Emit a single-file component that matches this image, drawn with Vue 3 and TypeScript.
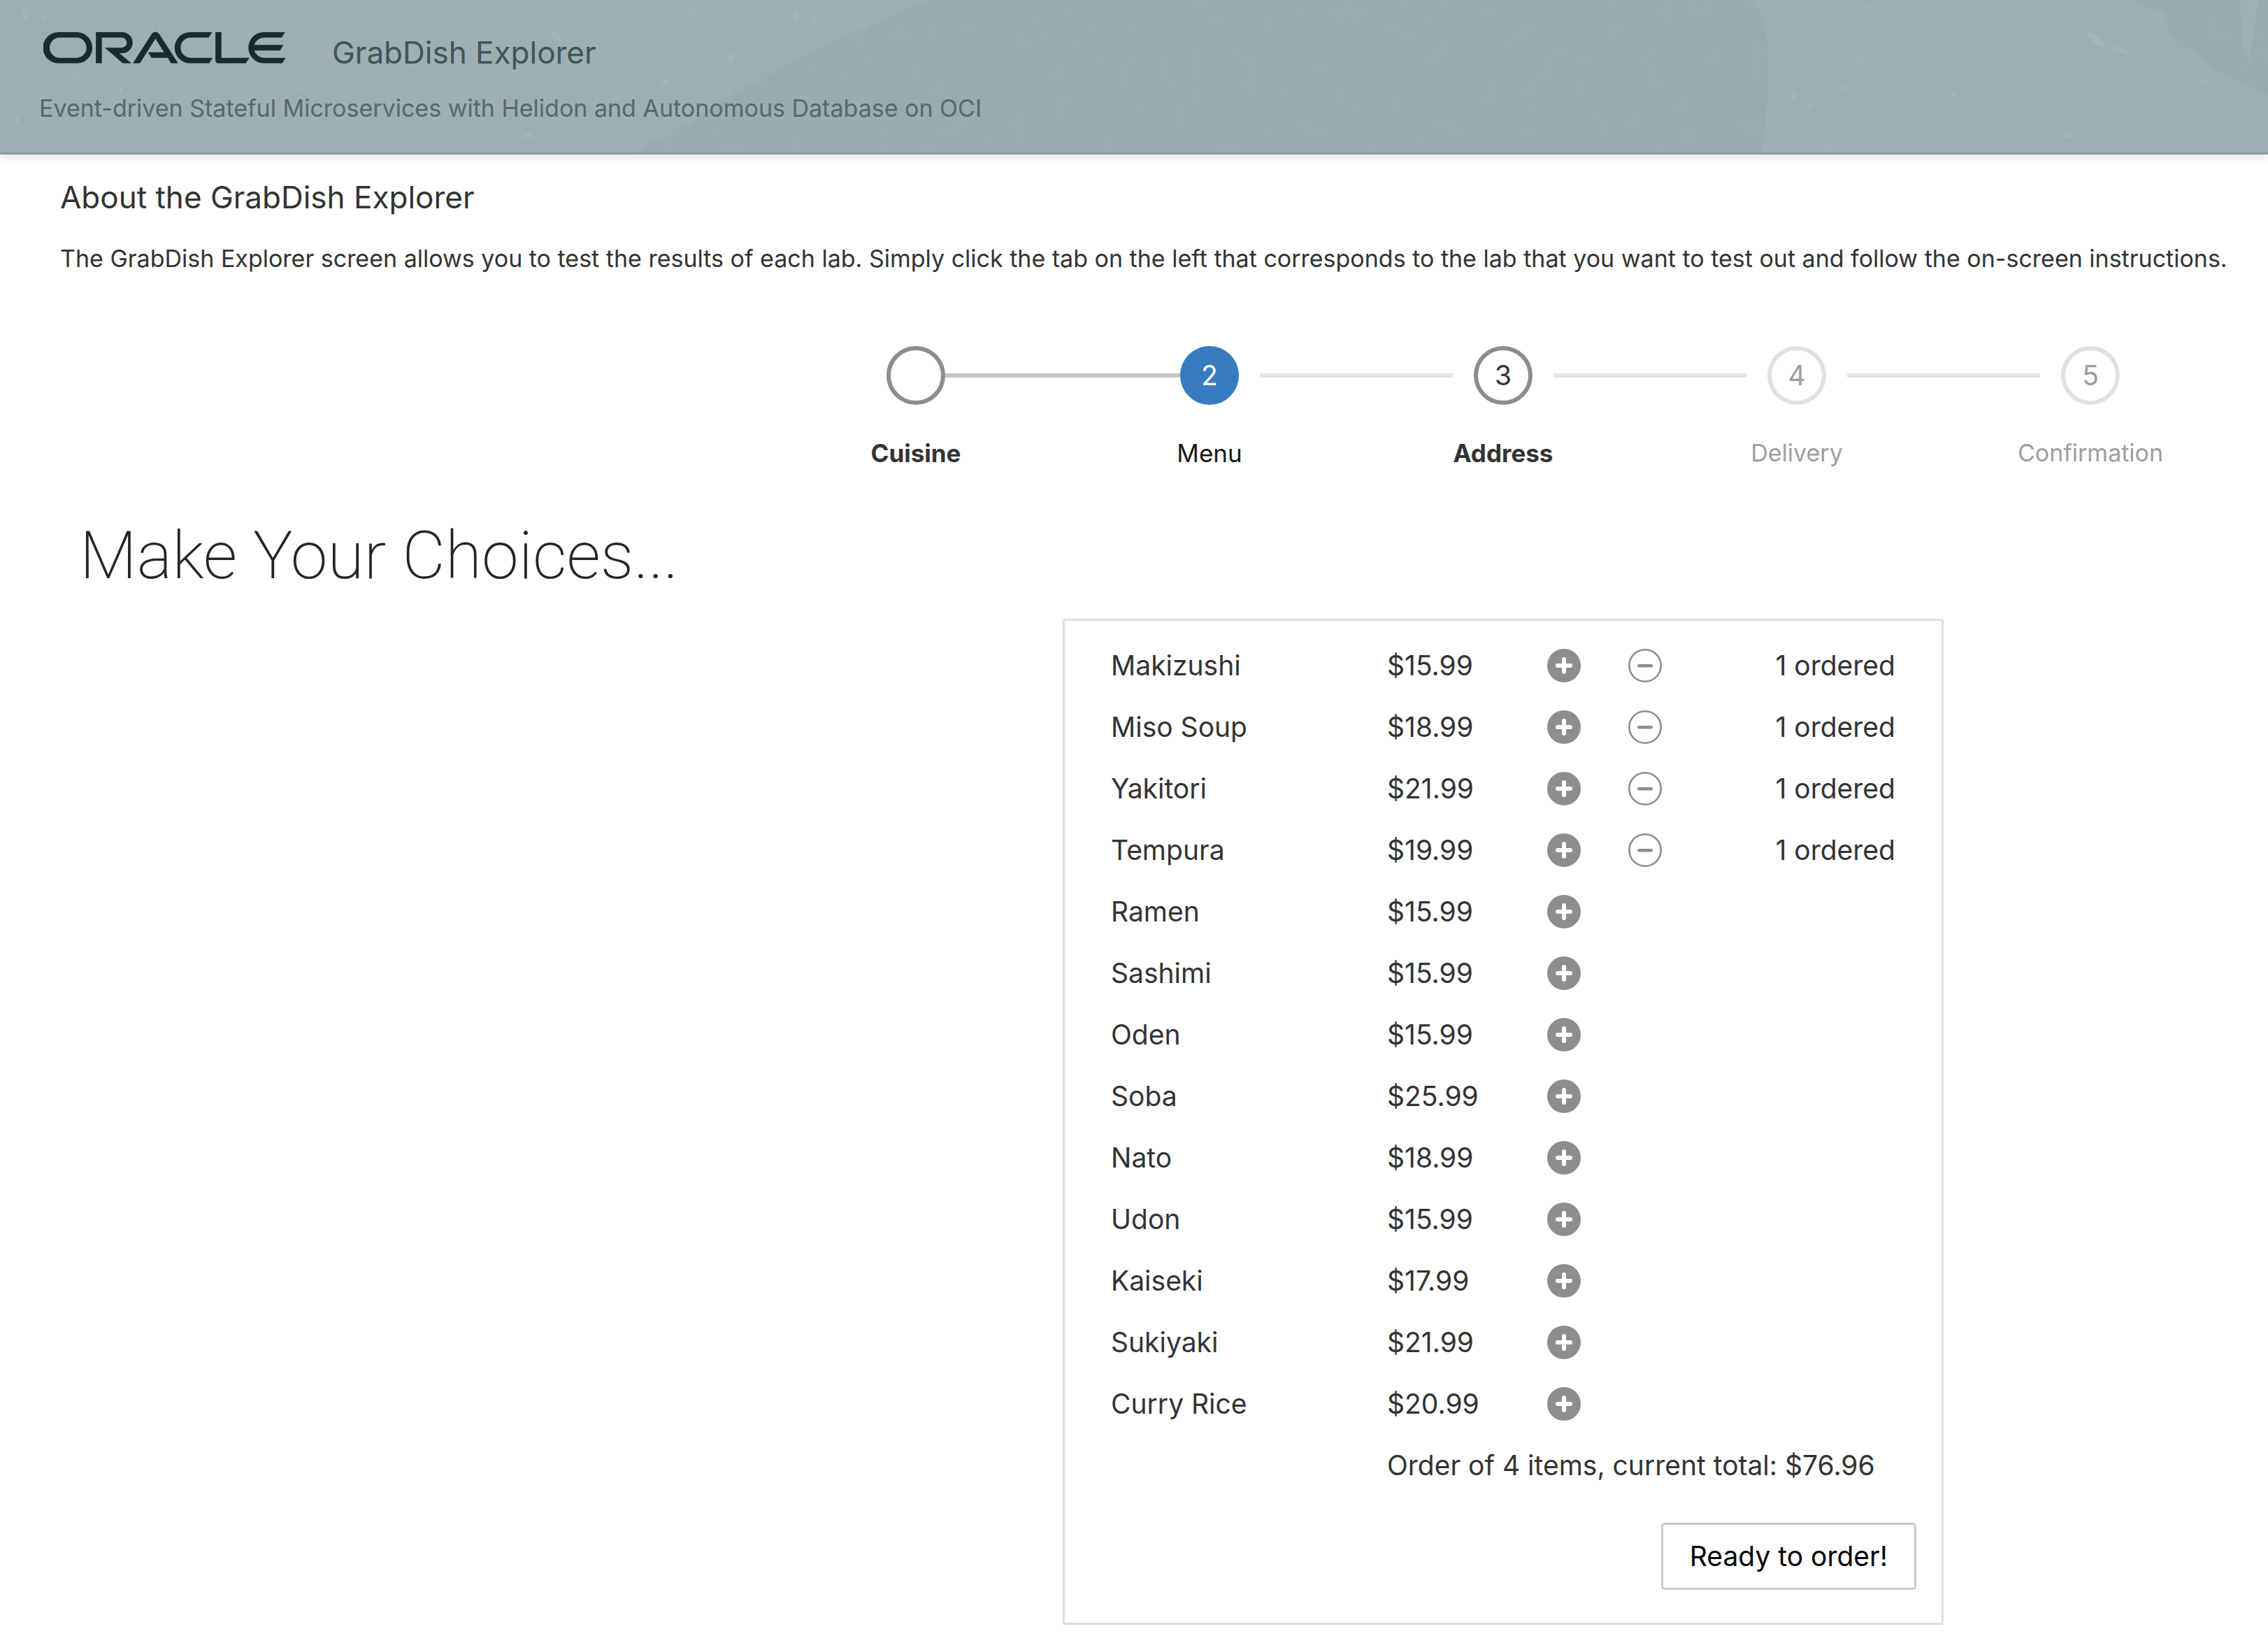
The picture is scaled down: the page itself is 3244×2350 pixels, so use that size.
<script setup lang="ts">
import { computed, ref } from 'vue'

interface Step {
  label: string
  mark: string
  state: 'visited' | 'current' | 'next' | 'disabled'
}

interface Dish {
  name: string
  price: number
  ordered: number
}

const steps: Step[] = [
  { label: 'Cuisine', mark: '', state: 'visited' },
  { label: 'Menu', mark: '2', state: 'current' },
  { label: 'Address', mark: '3', state: 'next' },
  { label: 'Delivery', mark: '4', state: 'disabled' },
  { label: 'Confirmation', mark: '5', state: 'disabled' },
]

const dishes = ref<Dish[]>([
  { name: 'Makizushi', price: 15.99, ordered: 1 },
  { name: 'Miso Soup', price: 18.99, ordered: 1 },
  { name: 'Yakitori', price: 21.99, ordered: 1 },
  { name: 'Tempura', price: 19.99, ordered: 1 },
  { name: 'Ramen', price: 15.99, ordered: 0 },
  { name: 'Sashimi', price: 15.99, ordered: 0 },
  { name: 'Oden', price: 15.99, ordered: 0 },
  { name: 'Soba', price: 25.99, ordered: 0 },
  { name: 'Nato', price: 18.99, ordered: 0 },
  { name: 'Udon', price: 15.99, ordered: 0 },
  { name: 'Kaiseki', price: 17.99, ordered: 0 },
  { name: 'Sukiyaki', price: 21.99, ordered: 0 },
  { name: 'Curry Rice', price: 20.99, ordered: 0 },
])

const itemCount = computed(() => dishes.value.reduce((n, d) => n + d.ordered, 0))
const total = computed(() => dishes.value.reduce((n, d) => n + d.ordered * d.price, 0).toFixed(2))
</script>

<template>
  <div class="page">
    <header class="banner">
      <svg class="texture" viewBox="0 0 3244 218" preserveAspectRatio="xMidYMid slice" aria-hidden="true">
        <defs>
          <filter id="paper" x="0" y="0" width="100%" height="100%">
            <feTurbulence type="fractalNoise" baseFrequency="0.04 0.03" numOctaves="3" seed="4" />
            <feColorMatrix values="0 0 0 0 0.55  0 0 0 0 0.65  0 0 0 0 0.68  1.2 0 0 0 -0.5" />
          </filter>
        </defs>
        <path fill="#99abae" d="M1328 0C1290 18 1262 30 1215 48C1180 62 1140 84 1110 102C1072 124 1030 142 1000 168C970 186 930 204 908 218H2520C2526 180 2530 120 2530 84C2528 50 2522 20 2508 0Z" />
        <path fill="#99abae" d="M3046 0L3094 18L3104 50L3136 72L3164 98L3204 116L3244 136V0Z" />
        <path fill="#9db1b6" d="M3204 0H3230L3218 90L3208 68Z" />
        <rect width="3244" height="218" filter="url(#paper)" opacity="0.12" />
        <g fill="#a0b6ba">
          <ellipse cx="36" cy="20" rx="5" ry="8" />
          <ellipse cx="64" cy="26" rx="3" ry="4" />
          <ellipse cx="796" cy="52" rx="9" ry="5" transform="rotate(40 796 52)" />
          <ellipse cx="434" cy="126" rx="5" ry="3" />
          <ellipse cx="172" cy="128" rx="3" ry="5" />
          <ellipse cx="24" cy="172" rx="3" ry="6" />
          <ellipse cx="754" cy="194" rx="8" ry="4" />
          <ellipse cx="1138" cy="21" rx="5" ry="8" />
          <ellipse cx="1166" cy="27" rx="3" ry="4" />
          <ellipse cx="1046" cy="83" rx="4" ry="6" />
          <ellipse cx="952" cy="118" rx="5" ry="4" />
          <ellipse cx="2656" cy="82" rx="5" ry="3" />
          <ellipse cx="2636" cy="126" rx="7" ry="3" />
          <ellipse cx="2565" cy="139" rx="3" ry="7" />
          <ellipse cx="2590" cy="152" rx="4" ry="3" />
          <ellipse cx="2794" cy="136" rx="5" ry="3" />
          <ellipse cx="2998" cy="57" rx="17" ry="5" transform="rotate(38 2998 57)" />
          <ellipse cx="3032" cy="71" rx="12" ry="3" transform="rotate(16 3032 71)" />
          <ellipse cx="2958" cy="193" rx="9" ry="4" />
          <ellipse cx="3152" cy="118" rx="7" ry="3" />
          <ellipse cx="2676" cy="11" rx="6" ry="3" />
        </g>
      </svg>
      <div class="brand">
        <svg class="logo" viewBox="0 0 231 30" role="img" aria-label="Oracle">
          <path fill="#182b2f" d="M99.61,19.52h15.24l-8.05-13L92,30H85.27l18-28.17a4.29,4.29,0,0,1,7-.05L128.32,30h-6.73l-3.17-5.25H103l-3.36-5.23m69.93,5.23V0.28h-5.72V27.16a2.76,2.76,0,0,0,.85,2,2.89,2.89,0,0,0,2.08.87h26l3.39-5.25H169.54M75,20.38A10,10,0,0,0,75,.28H50V30h5.71V5.54H74.65a4.81,4.81,0,0,1,0,9.62H58.54L75.6,30h8.29L72.43,20.38H75M14.88,30H32.15a14.86,14.86,0,0,0,0-29.71H14.88a14.86,14.86,0,1,0,0,29.71m16.88-5.23H15.26a9.62,9.62,0,0,1,0-19.23h16.5a9.62,9.62,0,0,1,0,19.23M140.25,30h17.63l3.34-5.23H140.64a9.62,9.62,0,1,1,0-19.23h16.75l3.38-5.25H140.25a14.86,14.86,0,1,0,0,29.71m69.87-5.23a9.62,9.62,0,0,1-9.26-7h24.42l3.36-5.24H200.86a9.61,9.61,0,0,1,9.26-7h16.76l3.35-5.25h-20.5a14.86,14.86,0,0,0,0,29.71h17.63l3.35-5.23h-20.6" />
        </svg>
        <h1 class="title">GrabDish Explorer</h1>
      </div>
      <p class="subtitle">Event-driven Stateful Microservices with Helidon and Autonomous Database on OCI</p>
    </header>

    <main>
      <section class="about">
        <h2>About the GrabDish Explorer</h2>
        <p>
          The GrabDish Explorer screen allows you to test the results of each lab. Simply click the tab on the left that
          corresponds to the lab that you want to test out and follow the on-screen instructions.
        </p>
      </section>

      <ol class="train">
        <li v-for="step in steps" :key="step.label" class="step" :class="step.state">
          <div class="track">
            <span class="line before"></span>
            <span class="circle">{{ step.mark }}</span>
            <span class="line after"></span>
          </div>
          <a v-if="step.state === 'visited' || step.state === 'next'" class="label" href="#">{{ step.label }}</a>
          <span v-else class="label">{{ step.label }}</span>
        </li>
      </ol>

      <h2 class="heading">Make Your Choices...</h2>

      <section class="order">
        <div class="panel">
          <table class="menu">
            <colgroup>
              <col class="c-name" />
              <col class="c-price" />
              <col class="c-icon" />
              <col class="c-icon" />
              <col />
            </colgroup>
            <tbody>
              <tr v-for="dish in dishes" :key="dish.name">
                <td>{{ dish.name }}</td>
                <td>${{ dish.price.toFixed(2) }}</td>
                <td>
                  <button class="icon" type="button" :aria-label="`Add ${dish.name}`" @click="dish.ordered++">
                    <svg viewBox="0 0 48 48">
                      <circle cx="24" cy="24" r="24" fill="#8c8d8f" />
                      <path d="M15 24H33M24 15V33" stroke="#fff" stroke-width="6" stroke-linecap="round" />
                    </svg>
                  </button>
                </td>
                <td>
                  <button
                    v-if="dish.ordered"
                    class="icon"
                    type="button"
                    :aria-label="`Remove ${dish.name}`"
                    @click="dish.ordered--"
                  >
                    <svg viewBox="0 0 48 48">
                      <circle cx="24" cy="24" r="22.7" fill="none" stroke="#8c8d8f" stroke-width="2.6" />
                      <rect x="13" y="22" width="22" height="4.4" rx="2" fill="#8c8d8f" />
                    </svg>
                  </button>
                </td>
                <td class="count"><template v-if="dish.ordered">{{ dish.ordered }} ordered</template></td>
              </tr>
              <tr>
                <td></td>
                <td colspan="4">Order of {{ itemCount }} items, current total: ${{ total }}</td>
              </tr>
            </tbody>
          </table>
          <div class="actions">
            <button class="ready" type="button">Ready to order!</button>
          </div>
        </div>
      </section>
    </main>
  </div>
</template>

<style>
body {
  margin: 0;
  background: #fff;
}
</style>

<style scoped>
.page {
  font-family: Inter, "Liberation Sans", sans-serif;
  font-size: 34px;
  line-height: 44px;
  color: #333;
}

h1,
h2,
p,
ol {
  margin: 0;
  padding: 0;
  font-weight: 400;
}

.banner {
  position: relative;
  padding: 45px 56px 41px;
  background: #9dafb3;
  border-bottom: 3px solid #8c9fa3;
  box-shadow: 0 4px 12px rgba(0, 0, 0, 0.12);
}

.texture {
  position: absolute;
  inset: 0;
  width: 100%;
  height: 100%;
}

.brand {
  position: relative;
  display: flex;
  gap: 66px;
  padding-left: 6px;
}

.logo {
  width: 347px;
  height: 46px;
}

.title {
  font-size: 44px;
  line-height: 60px;
  color: #41555a;
}

.subtitle {
  position: relative;
  margin-top: 28px;
  color: #54696e;
}

.about {
  padding: 31px 44px 0 86px;
}

.about h2 {
  font-size: 44px;
  line-height: 60px;
}

.about p {
  margin-top: 36px;
}

.train {
  display: flex;
  margin: 103px 44px 0 1100px;
  list-style: none;
}

.step {
  flex: 1;
  display: flex;
  flex-direction: column;
  align-items: center;
}

.track {
  align-self: stretch;
  display: grid;
  grid-template-columns: 1fr 84px 1fr;
  align-items: center;
  margin-bottom: 47px;
}

.circle {
  box-sizing: border-box;
  height: 84px;
  border: 6px solid #8c8d8f;
  border-radius: 50%;
  font-size: 39px;
  line-height: 72px;
  text-align: center;
}

.line {
  height: 6px;
  background: #e4e6e5;
}

.before {
  margin-right: 30px;
}

.after {
  margin-left: 30px;
}

.visited .after {
  margin-left: 0;
  background: #c5c6c8;
}

.current .before {
  margin-right: 0;
  background: #c5c6c8;
}

.step:first-child .before,
.step:last-child .after {
  visibility: hidden;
}

.label {
  color: inherit;
  font-size: 35px;
  text-decoration: none;
}

.visited .label,
.next .label {
  font-weight: 700;
}

.current .label {
  color: #161616;
}

.current .circle {
  border-color: #387bc1;
  background: #387bc1;
  color: #fff;
}

.disabled {
  color: #9e9e9e;
}

.disabled .label {
  font-size: 34px;
}

.disabled .circle {
  border-color: #dfe1e0;
}

.heading {
  margin: 65px 44px 0 114px;
  font-family: Roboto, Inter, sans-serif;
  font-size: 95px;
  line-height: 120px;
  font-weight: 200;
  color: #252525;
}

.order {
  margin: 30px 44px 0 1100px;
}

.panel {
  box-sizing: border-box;
  width: 60%;
  margin: 0 auto;
  padding: 20px 36px 47px;
  border: 3px solid #e0e0e0;
  border-radius: 3px;
  font-size: 39px;
}

.menu {
  width: calc(100% - 60px);
  margin: 0 30px;
  table-layout: fixed;
  border-collapse: collapse;
}

.c-name {
  width: 395px;
}

.c-price {
  width: 229px;
}

.c-icon {
  width: 116px;
}

td {
  height: 88px;
  padding: 0;
  vertical-align: middle;
  white-space: nowrap;
}

.count {
  text-align: right;
}

.icon {
  display: block;
  width: 48px;
  height: 48px;
  padding: 0;
  border: 0;
  background: none;
}

.icon svg {
  display: block;
}

.actions {
  display: flex;
  justify-content: flex-end;
  margin-top: 38px;
}

.ready {
  height: 96px;
  padding: 0 38px;
  border: 3px solid #c8c9ca;
  border-radius: 5px;
  background: #fff;
  color: #000;
  font: inherit;
}
</style>
